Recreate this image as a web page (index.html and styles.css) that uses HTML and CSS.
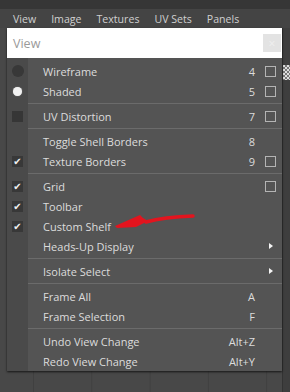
FILE: index.html
```html
<!DOCTYPE html>
<html lang="en">
<head>
    <meta charset="UTF-8">
    <meta name="viewport" content="width=device-width, initial-scale=1.0">
    <title>View Menu</title>
    <link rel="stylesheet" href="styles.css">
</head>
<body>
    <div class="top-strip"></div>

    <!-- Panel menu bar -->
    <div class="menubar">
        <span>View</span>
        <span>Image</span>
        <span>Textures</span>
        <span>UV Sets</span>
        <span>Panels</span>
    </div>

    <div class="stage">
        <div class="popup">
            <!-- Search field -->
            <div class="search">
                <span class="search-text">View</span>
                <span class="search-clear">&times;</span>
            </div>

            <!-- Menu items -->
            <div class="menu">
                <div class="row"><span class="ico"><i class="dot-dark"></i></span><span class="label">Wireframe</span><span class="key">4</span><span class="opt"><i class="box"></i></span></div>
                <div class="row"><span class="ico"><i class="dot-light"></i></span><span class="label">Shaded</span><span class="key">5</span><span class="opt"><i class="box"></i></span></div>
                <div class="sep"></div>
                <div class="row"><span class="ico"><i class="square"></i></span><span class="label">UV Distortion</span><span class="key">7</span><span class="opt"><i class="box"></i></span></div>
                <div class="sep"></div>
                <div class="row"><span class="ico"></span><span class="label">Toggle Shell Borders</span><span class="key">8</span><span class="opt"></span></div>
                <div class="row"><span class="ico"><i class="check">&#10004;</i></span><span class="label">Texture Borders</span><span class="key">9</span><span class="opt"><i class="box"></i></span></div>
                <div class="sep"></div>
                <div class="row"><span class="ico"><i class="check">&#10004;</i></span><span class="label">Grid</span><span class="key"></span><span class="opt"><i class="box"></i></span></div>
                <div class="row"><span class="ico"><i class="check">&#10004;</i></span><span class="label">Toolbar</span><span class="key"></span><span class="opt"></span></div>
                <div class="row"><span class="ico"><i class="check">&#10004;</i></span><span class="label">Custom Shelf</span><span class="key"></span><span class="opt"></span></div>
                <div class="row"><span class="ico"></span><span class="label">Heads-Up Display</span><span class="key"></span><span class="opt"><i class="sub"></i></span></div>
                <div class="sep"></div>
                <div class="row"><span class="ico"></span><span class="label">Isolate Select</span><span class="key"></span><span class="opt"><i class="sub"></i></span></div>
                <div class="sep"></div>
                <div class="row"><span class="ico"></span><span class="label">Frame All</span><span class="key">A</span><span class="opt"></span></div>
                <div class="row"><span class="ico"></span><span class="label">Frame Selection</span><span class="key">F</span><span class="opt"></span></div>
                <div class="sep"></div>
                <div class="row"><span class="ico"></span><span class="label">Undo View Change</span><span class="key">Alt+Z</span><span class="opt"></span></div>
                <div class="row"><span class="ico"></span><span class="label">Redo View Change</span><span class="key">Alt+Y</span><span class="opt"></span></div>
            </div>

            <!-- Red annotation arrow -->
            <svg class="annotation" width="90" height="24" viewBox="0 0 90 24">
                <path d="M34 12 Q52 7 81 6" fill="none" stroke="#e3141e" stroke-width="3.5" stroke-linecap="round"/>
                <path d="M3 16 L28 5 L31 8 L36 11 L24 17 L5 18 Z" fill="#e3141e"/>
            </svg>
        </div>

        <div class="side">
            <div class="checker"></div>
        </div>
    </div>
</body>
</html>
```

FILE: styles.css
```css
body {
    margin: 0;
    width: 290px;
    height: 392px;
    overflow: hidden;
    background-color: #474747;
    font-family: "Open Sans", "Noto Sans", sans-serif;
    font-size: 11px;
    color: #dcdcdc;
}

.top-strip {
    height: 9px;
    background-color: #363636;
}

.menubar {
    height: 19px;
    display: flex;
    align-items: center;
    gap: 15px;
    padding-left: 13px;
    background-color: #444;
    color: #d0d0d0;
    font-size: 10.6px;
}

.stage {
    display: flex;
    height: 364px;
    background-color: #484848;
    background-image: linear-gradient(90deg, #404040 1px, transparent 1px);
    background-size: 58.3px 100%;
    background-position: 33px 0;
}

.popup {
    position: relative;
    width: 275px;
    margin-left: 7px;
    align-self: flex-start;
    box-shadow: 0 1px 2px rgba(0, 0, 0, 0.7);
}

/* Search field */
.search {
    height: 30px;
    display: flex;
    align-items: center;
    justify-content: space-between;
    background-color: #fff;
    padding: 0 1px 0 6px;
}

.search-text {
    color: #9a9a9a;
    font-size: 12.5px;
}

.search-clear {
    width: 18px;
    height: 18px;
    display: flex;
    align-items: center;
    justify-content: center;
    background-color: #e3e3e3;
    color: #efefef;
    font-size: 12px;
}

/* Menu */
.menu {
    padding-top: 3px;
    background: linear-gradient(90deg, #4a4a4a 21px, #545454 21px);
}

.row {
    height: 20px;
    display: flex;
    align-items: center;
}

.ico {
    width: 21px;
    height: 20px;
    display: flex;
    align-items: center;
    justify-content: center;
}

.label {
    flex: 1;
    padding-left: 15px;
}

.key {
    text-align: right;
}

.opt {
    width: 27px;
    display: flex;
    align-items: center;
    padding-left: 10px;
    box-sizing: border-box;
}

.sep {
    height: 1px;
    margin: 2px 0 2px 21px;
    background-color: #6b6b6b;
}

.dot-dark {
    width: 12px;
    height: 12px;
    border-radius: 50%;
    background-color: #383838;
}

.dot-light {
    width: 9px;
    height: 9px;
    border-radius: 50%;
    background-color: #f2f2f2;
    box-shadow: 0 0 1px #bbb;
}

.square {
    width: 11px;
    height: 11px;
    background-color: #363636;
}

.check {
    width: 11px;
    height: 11px;
    display: flex;
    align-items: center;
    justify-content: center;
    background-color: #383838;
    color: #f0f0f0;
    font-style: normal;
    font-size: 10px;
    font-family: "DejaVu Sans", sans-serif;
}

.box {
    width: 9px;
    height: 9px;
    border: 1px solid #b4b4b4;
}

.sub {
    width: 0;
    height: 0;
    margin-left: 4px;
    border-top: 3.5px solid transparent;
    border-bottom: 3.5px solid transparent;
    border-left: 4px solid #f4f4f4;
}

.annotation {
    position: absolute;
    left: 105px;
    top: 182px;
}

/* Right edge of the viewport */
.side {
    flex: 1;
    border-left: 1px solid #333;
    background-color: #3e3e3e;
}

.checker {
    height: 15px;
    margin-top: 37px;
    background-color: #ddd;
    background-image:
        linear-gradient(45deg, #777 25%, transparent 25%, transparent 75%, #777 75%),
        linear-gradient(45deg, #777 25%, transparent 25%, transparent 75%, #777 75%);
    background-size: 4px 4px;
    background-position: 0 0, 2px 2px;
}
```
